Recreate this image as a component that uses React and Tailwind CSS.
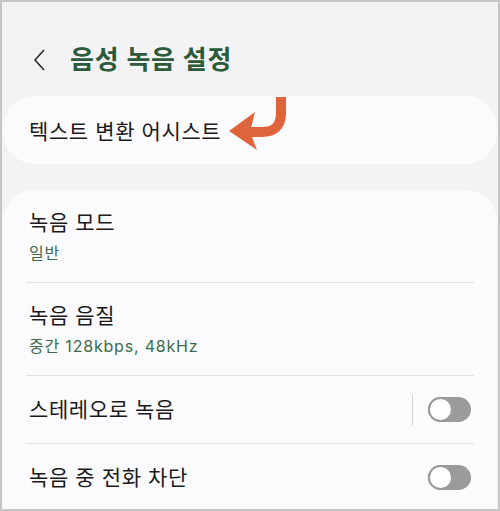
import React from 'react';

const Toggle = () => (
  <div className="relative w-[43px] h-[25px] rounded-full bg-[#9b9b9d]">
    <div className="absolute left-0 top-0 w-[25px] h-[25px] rounded-full bg-white border-[2.5px] border-[#9b9b9d]" />
  </div>
);

const Divider = () => <div className="mx-[23px] h-px bg-[#e3e3e6]" />;

export default function App() {
  const font = { fontFamily: 'Inter, "Noto Sans CJK KR", "Noto Sans", sans-serif' };

  return (
    <div
      className="w-[500px] h-[511px] overflow-hidden bg-[#f3f3f5] border-2 border-[#c6c6c8]"
      style={font}
    >
      {/* header */}
      <div className="flex items-end h-[94px] pl-[30px] pb-[17px]">
        <svg width="16" height="24" viewBox="0 0 16 24" className="mr-[22px] mb-[7px]">
          <path d="M12 2 L3 12 L12 22" fill="none" stroke="#2a2a2a" strokeWidth="1.6" />
        </svg>
        <h1 className="text-[26px] leading-[38px] font-bold text-[#2c5a3c] tracking-[0.8px]">음성 녹음 설정</h1>
      </div>

      {/* text assist card */}
      <div className="relative mx-px h-[68px] rounded-[32px] bg-[#fbfbfd] flex items-center pl-[26px] pt-[3px]">
        <span className="text-[21px] tracking-[0.6px] text-[#1a1a1a]">텍스트 변환 어시스트</span>
        <svg
          width="62"
          height="56"
          viewBox="0 0 62 56"
          className="absolute left-[224px] top-[1px]"
        >
          <path
            d="M54 0 L54 16 Q54 35 35 35 L20 35"
            fill="none"
            stroke="#df643c"
            strokeWidth="10"
          />
          <polygon points="2,34 28,15 23,35 30,53" fill="#df643c" />
        </svg>
      </div>

      {/* settings list */}
      <div className="mt-[26px] mx-px rounded-t-[32px] bg-[#fbfbfd]">
        <div className="px-[26px] pt-[19px] pb-[18px]">
          <div className="text-[21px] tracking-[0.6px] leading-[28px] text-[#1a1a1a]">녹음 모드</div>
          <div className="mt-[5px] text-[16px] tracking-[0.8px] leading-[22px] text-[#3d6b4b]">일반</div>
        </div>
        <Divider />
        <div className="px-[26px] pt-[19px] pb-[18px]">
          <div className="text-[21px] tracking-[0.6px] leading-[28px] text-[#1a1a1a]">녹음 음질</div>
          <div className="mt-[5px] text-[16px] tracking-[0.8px] leading-[22px] text-[#3d6b4b]">중간 128kbps, 48kHz</div>
        </div>
        <Divider />
        <div className="flex items-center h-[67px] pl-[26px] pr-[26px]">
          <span className="flex-1 text-[21px] tracking-[0.6px] text-[#1a1a1a]">스테레오로 녹음</span>
          <div className="w-px h-[30px] bg-[#d2d2d4] mr-[15px]" />
          <Toggle />
        </div>
        <Divider />
        <div className="flex items-center h-[67px] pl-[26px] pr-[26px]">
          <span className="flex-1 text-[21px] tracking-[0.6px] text-[#1a1a1a]">녹음 중 전화 차단</span>
          <Toggle />
        </div>
      </div>
    </div>
  );
}
